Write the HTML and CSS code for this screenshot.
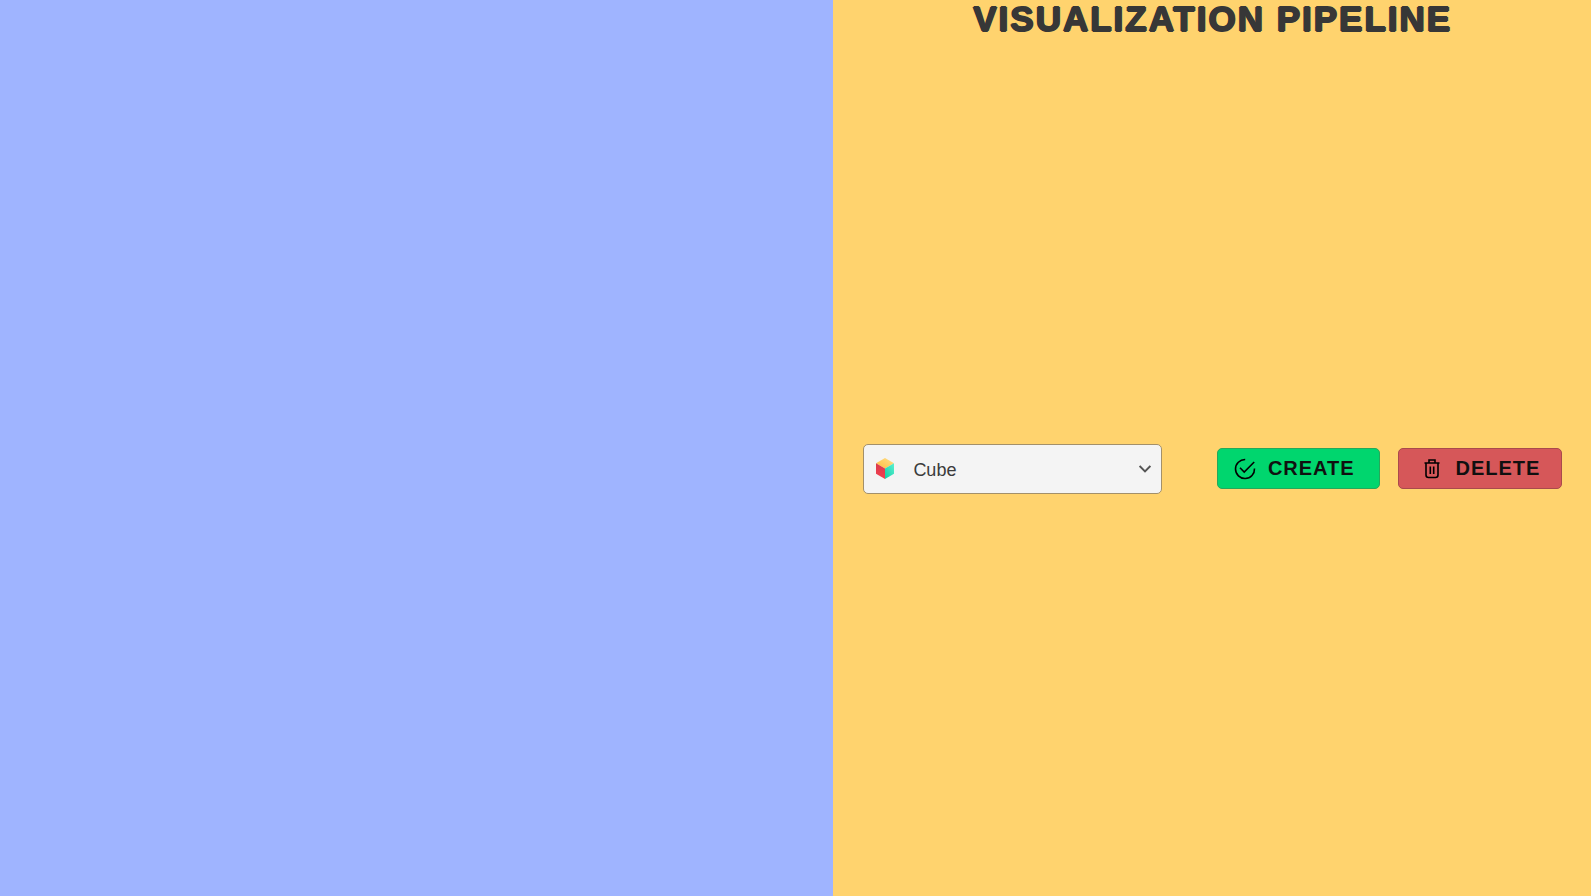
FILE: index.html
```
<!DOCTYPE html>
<html lang="en">
<head>
<meta charset="utf-8">
<title>Visualization Pipeline</title>
<link rel="stylesheet" href="styles.css">
</head>
<body>
<div class="app">
  <section class="viewport" aria-label="Viewport"></section>
  <main class="panel">
    <h1 class="title">VISUALIZATION PIPELINE</h1>
    <form class="controls">
      <div class="picker">
        <select class="picker-select" aria-label="Shape">
          <option>Cube</option>
        </select>
        <svg class="picker-icon" viewBox="0 0 18 21" aria-hidden="true">
          <defs>
            <linearGradient id="top" x1="0" y1="1" x2="1" y2="0"><stop offset="0" stop-color="#ffbd3e"/><stop offset="1" stop-color="#ffe08a"/></linearGradient>
            <linearGradient id="left" x1="0" y1="0" x2="0" y2="1"><stop offset="0" stop-color="#d93a4c"/><stop offset="1" stop-color="#f5404f"/></linearGradient>
            <linearGradient id="right" x1="0" y1="1" x2="1" y2="0"><stop offset="0" stop-color="#12cfa6"/><stop offset="1" stop-color="#5cf0d0"/></linearGradient>
          </defs>
          <path fill="url(#top)" d="M9 0L18 5.2L9 10.5L0 5.2Z"/>
          <path fill="url(#left)" d="M0 5.2L9 10.5V21L0 15.8Z"/>
          <path fill="url(#right)" d="M18 5.2L9 10.5V21L18 15.8Z"/>
        </svg>
        <svg class="picker-arrow" viewBox="0 0 12 8" aria-hidden="true"><path d="M0.6 1L6 6.4L11.4 1"/></svg>
      </div>
      <div class="actions">
        <button class="button button-create" type="button">
          <svg class="button-icon" viewBox="0 0 22 22" aria-hidden="true"><path d="M11.2 1.5A9.5 9.5 0 1 0 20.5 10.5M6 9.8L10.2 14L20.2 4"/></svg>
          <span>CREATE</span>
        </button>
        <button class="button button-delete" type="button">
          <svg class="button-icon" viewBox="0 0 22 22" aria-hidden="true"><path d="M3.5 5H18.5M8 5V2H14V5M5 5V17Q5 19.5 7.5 19.5H14.5Q17 19.5 17 17V5M9.3 8.5V16M12.7 8.5V16"/></svg>
          <span>DELETE</span>
        </button>
      </div>
    </form>
  </main>
</div>
</body>
</html>
```
FILE: styles.css
```
* {
  box-sizing: border-box;
}

body {
  margin: 0;
  font-family: "Liberation Sans", Arial, sans-serif;
}

.app {
  display: grid;
  grid-template-columns: 1.1fr 1fr;
  min-height: 100vh;
}

.viewport {
  background: #9fb4ff;
}

.panel {
  display: flex;
  flex-direction: column;
  padding: 0 29px 0 30px;
  background: #ffd36e;
}

.title {
  margin: 0 0 3px;
  color: #373737;
  font-size: 35px;
  line-height: 38px;
  letter-spacing: 2px;
  text-align: center;
  text-shadow: 1px 0 #373737, -1px 0 #373737, 0 1px #373737, 0 -1px #373737;
}

.controls {
  display: flex;
  flex: 1;
  align-items: center;
  justify-content: space-between;
}

.picker {
  position: relative;
  width: 42.7%;
}

.picker-select {
  display: block;
  width: 100%;
  height: 50px;
  padding: 2px 40px 0 49px;
  border: 1px solid #a3906a;
  border-radius: 5px;
  background: #f4f4f4;
  color: #3b3b3b;
  font: 18px "Liberation Sans", Arial, sans-serif;
  appearance: none;
}

.picker-icon {
  position: absolute;
  top: 14px;
  left: 13px;
  width: 18px;
  height: 21px;
  pointer-events: none;
}

.picker-arrow {
  position: absolute;
  top: 21px;
  right: 11px;
  width: 12px;
  height: 8px;
  fill: none;
  stroke: #555;
  stroke-width: 2;
  pointer-events: none;
}

.actions {
  display: grid;
  grid-template-columns: 1fr 1fr;
  gap: 18px;
  width: 49.4%;
}

.button {
  display: flex;
  align-items: center;
  gap: 12px;
  height: 41px;
  padding: 0 16px;
  border: 1px solid;
  border-radius: 5px;
  color: #101010;
  font: bold 20px "Liberation Sans", Arial, sans-serif;
  letter-spacing: 1px;
}

.button-create {
  border-color: #26a85a;
  background: #00d66e;
}

.button-delete {
  padding-left: 22px;
  border-color: #a94a4c;
  background: #d65759;
}

.button-icon {
  flex: none;
  width: 22px;
  height: 22px;
  fill: none;
  stroke: #000;
  stroke-width: 1.6;
}
```
